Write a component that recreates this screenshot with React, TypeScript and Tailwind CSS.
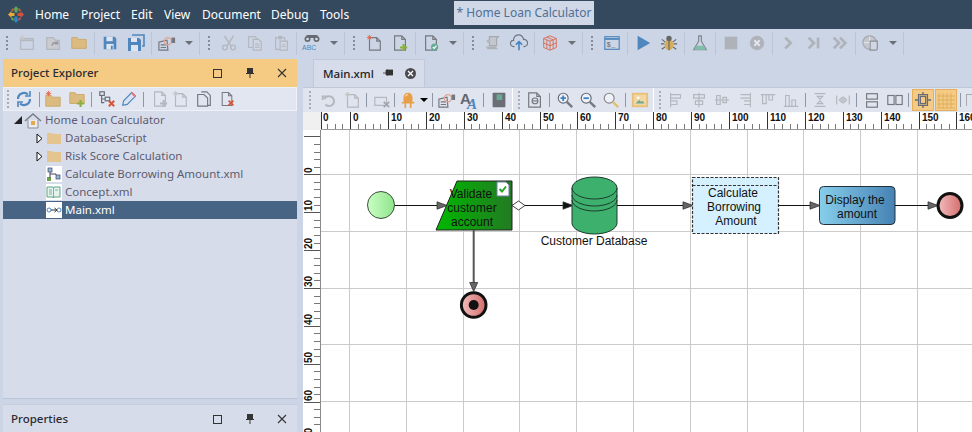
import React from "react";

const C = { g: "#b4b7be", d: "#75787e", b: "#4f86bd", t: "#dcbb80", o: "#e8a048", r: "#d9553a" };

function Svg({ children, s = 18 }: { children: React.ReactNode; s?: number }) {
  return (
    <svg width={s} height={s} viewBox="0 0 20 20" fill="none" strokeWidth="1.3">
      {children}
    </svg>
  );
}
const Sun = ({ x = 5, y = 4, c = "#e8684a" }: { x?: number; y?: number; c?: string }) => (
  <g stroke={c} strokeWidth="1">
    <path d={`M${x - 3} ${y}h6M${x} ${y - 3}v6M${x - 2} ${y - 2}l4 4M${x + 2} ${y - 2}l-4 4`} />
  </g>
);
const Doc = ({ c = C.d, x = 4, y = 2, w = 12, h = 16 }: { c?: string; x?: number; y?: number; w?: number; h?: number }) => (
  <path d={`M${x} ${y}h${w - 4}l4 4v${h - 4}h-${w}zM${x + w - 4} ${y}v4h4`} stroke={c} fill="none" />
);
const Plus = ({ c = "#8ab13c", x = 14, y = 15 }: { c?: string; x?: number; y?: number }) => (
  <path d={`M${x - 4} ${y}h8M${x} ${y - 4}v8`} stroke={c} strokeWidth="2.4" />
);
const Cross = ({ x = 15, y = 15 }: { x?: number; y?: number }) => (
  <path d={`M${x - 3} ${y - 3}l6 6M${x + 3} ${y - 3}l-6 6`} stroke={C.r} strokeWidth="2.2" />
);
const Folder = ({ c = C.t, x = 2, y = 4 }: { c?: string; x?: number; y?: number }) => (
  <path d={`M${x} ${y}h6l1.5 2H${x + 16}v10H${x}z`} fill={c} stroke="#c8a868" strokeWidth="1" />
);
const GearDoc = ({ c = "#e2a48f" }: { c?: string }) => (
  <g>
    <path d="M1 9l9-2 1 11H1zM3 12h6M3 15h6" stroke={C.d} />
    <circle cx="11" cy="8" r="4" stroke={c} />
    <path d="M15 4h4v6h-4z" fill={C.d} />
  </g>
);

const icons: Record<string, React.ReactNode> = {
  newwin: (<Svg><rect x="3" y="5" width="14" height="12" stroke={C.g} /><path d="M3 7h14" stroke={C.g} strokeWidth="2" /><Sun x={5} y={4} c="#c8c8c8" /></Svg>),
  opengray: (<Svg><path d="M3 17V4h7l3 3h4v10z" fill="#c9cbd0" stroke="#b4b7bc" /><path d="M9 13a3.5 3.5 0 0 1 6-2.5M15 8v3h-3" stroke="#96999f" strokeWidth="1.6" /></Svg>),
  folder: (<Svg><Folder y={4} /></Svg>),
  save: (<Svg><path d="M3 3h12l2 2v12H3z" fill={C.b} /><rect x="6" y="3" width="7" height="5" fill="#dfe5f0" /><rect x="6" y="11" width="8" height="6" fill="#dfe5f0" /><rect x="11" y="13" width="2" height="4" fill={C.b} /></Svg>),
  saveall: (<Svg s={20}><path d="M6 2h12v11h-2" stroke={C.b} strokeWidth="1.6" /><path d="M2 5h11l2 2v11H2z" fill={C.b} /><rect x="5" y="5" width="6" height="4" fill="#dfe5f0" /><rect x="5" y="12" width="7" height="6" fill="#dfe5f0" /></Svg>),
  gear: (<Svg><GearDoc /></Svg>),
  cut: (<Svg><circle cx="5.5" cy="15" r="2.6" stroke={C.g} strokeWidth="1.5" /><circle cx="14.5" cy="15" r="2.6" stroke={C.g} strokeWidth="1.5" /><path d="M5 2l7 11M15 2L8 13" stroke={C.g} strokeWidth="1.7" /></Svg>),
  copy: (<Svg><path d="M3 3h7l2 2v10H3z" stroke={C.g} /><path d="M8 6h6l3 3v9H8z" fill="#d0d6e4" stroke={C.g} /><path d="M10 11h5M10 13h5M10 15h5" stroke={C.g} strokeWidth="1" /></Svg>),
  paste: (<Svg><path d="M4 4h10v13H4z" stroke={C.g} /><rect x="7" y="2" width="4" height="4" fill={C.g} /><path d="M9 8h8v10H9z" fill="#d0d6e4" stroke={C.g} /><path d="M11 12h4M11 14h4" stroke={C.g} strokeWidth="1" /></Svg>),
  binoc: (<Svg s={20}><circle cx="5.5" cy="6" r="3" fill="#666a70" /><circle cx="14.5" cy="6" r="3" fill="#666a70" /><rect x="4" y="2" width="12" height="3" rx="1.5" fill="#666a70" /><circle cx="5.5" cy="6" r="1.3" fill="#d8dde8" /><circle cx="14.5" cy="6" r="1.3" fill="#d8dde8" /><text x="0" y="17" fontSize="7" fontWeight="400" fill="#4f86bd" fontFamily="Liberation Sans, sans-serif">ABC</text></Svg>),
  newdoc: (<Svg><Doc x={5} y={4} w={12} h={14} /><Sun x={5} y={4} /></Svg>),
  adddoc: (<Svg><Doc /><Plus /></Svg>),
  checkdoc: (<Svg><Doc /><circle cx="14" cy="14.5" r="4" fill="#6aa996" /><path d="M12 14.5l1.5 1.5 2.5-3" stroke="#fff" /></Svg>),
  scroll: (<Svg><path d="M6 3h10l-2 2v8H6z" fill="#c4c7cc" stroke="#a6a9af" /><path d="M2 14h11l2 2v1H4z" fill="#aeb1b7" /><circle cx="5" cy="8" r="2" fill="#b4b7be" /></Svg>),
  upload: (<Svg><path d="M5 14H4a3.5 3.5 0 0 1 0-7 5.5 5.5 0 0 1 11-1 4 4 0 0 1 1 8h-1" stroke="#6d7480" /><path d="M10 18V9M6.5 12L10 8.5l3.5 3.5" stroke="#3f80c0" strokeWidth="1.7" /></Svg>),
  cube: (<Svg><path d="M10 2l7 3v10l-7 3-7-3V5zM3 5l7 3 7-3M10 8v10M6.5 3.5l7 3M3 10l7 3 7-3M6.5 6.5v10M13.5 6.5v10" stroke="#d9684f" strokeWidth="1" /></Svg>),
  console: (<Svg><rect x="2" y="3" width="16" height="14" stroke={C.b} /><path d="M2 5.5h16" stroke={C.b} strokeWidth="2" /><text x="4" y="14" fontSize="8" fill="#666" fontFamily="Liberation Mono, monospace">$_</text></Svg>),
  play: (<Svg><path d="M4 2l14 8-14 8z" fill={C.b} /></Svg>),
  bug: (<Svg><path d="M2 6l4 3M18 6l-4 3M1 11h4M19 11h-4M2 17l4-3M18 17l-4-3" stroke="#666" /><ellipse cx="10" cy="12" rx="5" ry="6" fill="#d4ae5c" /><path d="M10 6v12" stroke="#666" /><circle cx="10" cy="5" r="3" fill="#666" /></Svg>),
  flask: (<Svg><path d="M8 2h4M8.5 2v6L3 17.5h14L11.5 8V2" stroke="#80858c" /><path d="M6 13h8l2.5 4.5h-13z" fill="#7cc0aa" /></Svg>),
  stop: (<Svg><rect x="3" y="3" width="14" height="14" fill="#afb2b9" /></Svg>),
  xcircle: (<Svg><circle cx="10" cy="10" r="8" fill="#afb2b9" /><path d="M7 7l6 6M13 7l-6 6" stroke="#e2e6ef" strokeWidth="2.2" /></Svg>),
  chev: (<Svg><path d="M7 4l6 6-6 6" stroke="#afb2b9" strokeWidth="3" /></Svg>),
  skip: (<Svg><path d="M4 4l6 6-6 6" stroke="#afb2b9" strokeWidth="3" /><rect x="13" y="4" width="3" height="12" fill="#afb2b9" /></Svg>),
  dbl: (<Svg><path d="M3 4l6 6-6 6M10 4l6 6-6 6" stroke="#afb2b9" strokeWidth="3" /></Svg>),
  globe: (<Svg><circle cx="8.5" cy="9.5" r="7.5" fill="#c3c6cc" stroke="#a6a9af" /><path d="M8.5 3v13M2 9.5h13" stroke="#dfe3ec" /><path d="M9 8h8v8a2 2 0 0 1-2 2H9z" fill="#d0d6e4" stroke="#8c8f95" /></Svg>),
  refresh: (<Svg s={20}><path d="M4 10a6 6 0 0 1 10-4.5M16 10a6 6 0 0 1-10 4.5" stroke="#4f86bd" strokeWidth="2.2" /><path d="M16 2v5h-5M4 18v-5h5" stroke="#4f86bd" strokeWidth="1.6" /></Svg>),
  newfolder: (<Svg><Folder y={6} /><Sun x={5} y={4} /></Svg>),
  addfolder: (<Svg><Folder y={3} /><Plus y={15} x={14} /></Svg>),
  tree: (<Svg><rect x="2" y="2" width="5" height="4" stroke="#666c78" /><rect x="8" y="8" width="5" height="4" stroke="#666c78" /><path d="M4 6v8h3M4 10h4" stroke="#666c78" /><Cross /></Svg>),
  pencil: (<Svg><path d="M3 17l1-5L13 3l4 4-9 9z" stroke="#4f86bd" fill="#d7e3f2" /><path d="M13 3l4 4" stroke="#e3787f" strokeWidth="2.4" /></Svg>),
  docplus: (<Svg><Doc c={C.g} /><Plus c={C.g} /></Svg>),
  newdocg: (<Svg><Doc c={C.g} x={5} y={4} w={12} h={14} /><Sun x={5} y={4} c="#c4c4c4" /></Svg>),
  docs: (<Svg><path d="M7 2h6l4 4v11h-3" stroke={C.d} /><path d="M3 5h7l4 4v9H3z" stroke={C.d} fill="#e0e5f0" /></Svg>),
  docx: (<Svg><Doc /><Cross /></Svg>),
  undo: (<Svg><path d="M5 9a5.5 5.5 0 1 1 1 6" stroke={C.g} strokeWidth="2.2" /><path d="M2 5h6v2H4v3H2z" fill={C.g} /></Svg>),
  desel: (<Svg><path d="M2 7h13v9H2z" stroke={C.g} /><path d="M12 12l6 6M18 12l-6 6" stroke="#a3a6ac" strokeWidth="2" /></Svg>),
  bulb: (<Svg><path d="M5 13V7a5 5 0 0 1 10 0v6z" fill={C.o} /><path d="M3 13h14M7 13v6M13 13v6" stroke={C.o} strokeWidth="1.8" /><path d="M7 6a3 3 0 0 1 3-2" stroke="#f8dcb0" /></Svg>),
  font: (<Svg s={20}><text x="0" y="14" fontSize="15" fontWeight="700" fill="#63666c" fontFamily="Liberation Sans, sans-serif">A</text><text x="7" y="19" fontSize="15" fontStyle="italic" fontWeight="700" fill="#4f86bd" fontFamily="Liberation Serif, serif">A</text></Svg>),
  book: (<Svg s={16}><rect x="2" y="1" width="16" height="18" rx="1" fill="#6b6e74" /><rect x="7" y="3" width="7" height="7" fill="#6aa996" /></Svg>),
  zoomdoc: (<Svg><Doc x={3} y={2} w={13} h={16} /><circle cx="10" cy="11" r="3.2" stroke={C.d} /><path d="M7.5 11h5" stroke={C.d} /></Svg>),
  zplus: (<Svg><circle cx="8" cy="8" r="5.5" stroke="#666c78" fill="#eef2f8" /><path d="M5 8h6M8 5v6" stroke="#3f80c0" strokeWidth="2" /><path d="M12 12l6 6" stroke={C.d} strokeWidth="2.6" /></Svg>),
  zminus: (<Svg><circle cx="8" cy="8" r="5.5" stroke="#666c78" fill="#eef2f8" /><path d="M5 8h6" stroke="#3f80c0" strokeWidth="2" /><path d="M12 12l6 6" stroke={C.d} strokeWidth="2.6" /></Svg>),
  zoom: (<Svg><circle cx="8" cy="8" r="5.5" stroke="#888" fill="#eef2f8" /><path d="M12 12l6 6" stroke="#e3bf6e" strokeWidth="2.6" /></Svg>),
  image: (<Svg><rect x="2" y="3" width="16" height="14" fill="#f3d7a2" stroke="#e8be78" strokeWidth="2" /><path d="M5 14l4-4 2 2 2-1 2 3z" fill="#6aa996" /><circle cx="8" cy="7.5" r="1.4" fill="#fff" /></Svg>),
  a1: (<Svg><path d="M4 2v16M4 4h11v4H4M4 11h7v4H4" stroke={C.g} /></Svg>),
  a2: (<Svg><path d="M10 2v16M4 4h12v4H4zM6 11h8v4H6z" stroke={C.g} /></Svg>),
  a3: (<Svg><path d="M2 10h16M4 5h4v10H4zM11 7h4v6h-4z" stroke={C.g} fill="#d8dde8" /></Svg>),
  a4: (<Svg><path d="M16 2v16M5 4h11v4H5M9 11h7v4H9" stroke={C.g} /></Svg>),
  a5: (<Svg><path d="M2 4h16M4 4v10h4V4M11 4v6h4V4" stroke={C.g} /></Svg>),
  a6: (<Svg><path d="M2 17h16M4 17V5h4v12M11 17v-7h4v7" stroke={C.g} /></Svg>),
  d1: (<Svg><path d="M4 3h12M4 17h12M7 6h6l-3 3zM7 14h6l-3-3z" stroke={C.g} /></Svg>),
  d2: (<Svg><path d="M3 5v10M17 5v10M6 10l3-3v6zM14 10l-3-3v6z" stroke={C.g} /></Svg>),
  g1: (<Svg><rect x="4" y="3" width="12" height="6" stroke={C.d} /><rect x="4" y="12" width="12" height="6" stroke={C.d} /></Svg>),
  g2: (<Svg><rect x="2" y="5" width="7" height="10" stroke={C.d} /><rect x="11" y="5" width="7" height="10" stroke={C.d} /></Svg>),
  snap: (<Svg><rect x="7" y="6" width="6" height="8" stroke="#666c78" strokeWidth="1.5" /><rect x="5" y="4" width="10" height="12" stroke="#666c78" /><path d="M10 1v3M10 16v3M1 10h4M15 10h4" stroke="#666c78" strokeWidth="1.5" /></Svg>),
  grid: (<Svg s={20}><path d="M3 3v15M7 3v15M11 3v15M15 3v15M1 6h18M1 10h18M1 14h18M1 18h18" stroke="#dcae60" strokeWidth="1" /></Svg>),
};

type It = { i?: string; k?: "sep" | "grip" | "caret" };

function Sep() {
  return <div className="w-px h-[23px] mx-[2px] shrink-0 bg-[#bcc5d6]" />;
}
function Grip() {
  return (
    <div className="w-[14px] flex flex-col items-center gap-[2px] shrink-0">
      {[0, 1, 2, 3].map((n) => (
        <div key={n} className="w-[2px] h-[2px] bg-[#868c97]" />
      ))}
    </div>
  );
}
function GripLight() {
  return (
    <div className="flex flex-col items-center gap-[2px] shrink-0">
      {[0, 1, 2, 3, 4].map((n) => (
        <div key={n} className="w-[2px] h-[2px] bg-[#a8adb8]" />
      ))}
    </div>
  );
}
function Caret() {
  return (
    <div className="w-[17px] flex justify-center shrink-0">
      <div className="w-0 h-0 border-x-[4px] border-x-transparent border-t-[4px] border-t-[#6b7078]" />
    </div>
  );
}
function Ic({ n, w = 26 }: { n: string; w?: number }) {
  return (
    <div className="flex items-center justify-center shrink-0" style={{ width: w }}>
      {icons[n]}
    </div>
  );
}

const mainBar: It[] = [
  { k: "grip" }, { i: "newwin" }, { i: "opengray" }, { i: "folder" }, { k: "sep" },
  { i: "save" }, { i: "saveall" }, { k: "sep" }, { i: "gear" }, { k: "caret" }, { k: "sep" },
  { k: "grip" }, { i: "cut" }, { i: "copy" }, { i: "paste" }, { k: "sep" },
  { i: "binoc" }, { k: "caret" }, { k: "sep" },
  { k: "grip" }, { i: "newdoc" }, { i: "adddoc" }, { k: "sep" }, { i: "checkdoc" }, { k: "caret" }, { k: "sep" },
  { k: "grip" }, { i: "scroll" }, { i: "upload" }, { k: "sep" }, { i: "cube" }, { k: "caret" }, { k: "sep" },
  { k: "grip" }, { i: "console" }, { k: "sep" }, { i: "play" }, { i: "bug" }, { k: "sep" }, { i: "flask" }, { k: "sep" },
  { i: "stop" }, { i: "xcircle" }, { k: "sep" }, { i: "chev" }, { i: "skip" }, { i: "dbl" }, { k: "sep" }, { i: "globe" }, { k: "caret" }, { k: "sep" },
];

function MainBar() {
  return (
    <div className="h-[29px] flex items-center pb-[1px] shrink-0">
      {mainBar.map((it, idx) =>
        it.k === "sep" ? <Sep key={idx} /> : it.k === "grip" ? <Grip key={idx} /> : it.k === "caret" ? <Caret key={idx} /> : <Ic key={idx} n={it.i!} />
      )}
    </div>
  );
}

function PanelHeader({ title, bg }: { title: string; bg: string }) {
  return (
    <div className={`h-[28px] flex items-center pl-[8px] shrink-0 ${bg}`}>
      <span className="text-[11.5px] font-medium text-[#2b2b33] flex-1">{title}</span>
      <div className="w-[9px] h-[9px] border border-[#333] mr-[23px]" />
      <svg width="10" height="12" viewBox="0 0 10 12" className="mr-[22px]">
        <path d="M2 1h6v5h1v1H1V6h1zM4.5 7h1v4h-1z" fill="#333" />
      </svg>
      <svg width="10" height="10" viewBox="0 0 10 10" className="mr-[10px]">
        <path d="M1 1l8 8M9 1l-8 8" stroke="#333" strokeWidth="1.1" />
      </svg>
    </div>
  );
}

function Tree() {
  const Row = ({ pl, arrow, icon, text, sel, gap = 2 }: { pl: number; arrow?: React.ReactNode; icon: React.ReactNode; text: string; sel?: boolean; gap?: number }) => (
    <div className={`h-[18px] flex items-center ${sel ? "bg-[#476484] text-white" : "text-[#5b5d72]"}`} style={{ paddingLeft: pl }}>
      <div className="w-[8px] mr-[1px] flex justify-center shrink-0">{arrow}</div>
      <div className="w-[19px] flex justify-center shrink-0" style={{ marginRight: gap }}>{icon}</div>
      <span className="text-[11.5px] whitespace-nowrap">{text}</span>
    </div>
  );
  const Hollow = (
    <svg width="7" height="11" viewBox="0 0 7 11">
      <path d="M1 1l5 4.5L1 10z" fill="#fff" stroke="#111" />
    </svg>
  );
  const Solid = (
    <svg width="8" height="8" viewBox="0 0 8 8">
      <path d="M8 0v8H0z" fill="#222" />
    </svg>
  );
  const folder = (
    <svg width="14" height="12" viewBox="0 0 14 12">
      <path d="M0 1h5l1 1h8v10H0z" fill="#e4c590" />
    </svg>
  );
  return (
    <div>
      <Row pl={11} arrow={Solid} text="Home Loan Calculator" gap={3} icon={
        <svg width="18" height="17" viewBox="0 0 18 17">
          <path d="M1 9l8-7 8 7" stroke="#7a7d85" strokeWidth="1.6" fill="none" />
          <path d="M4 8v8h10V8" stroke="#8a8d95" fill="#e8ebf2" />
          <rect x="7" y="9" width="4" height="4" fill="#e3a94a" />
        </svg>
      } />
      <Row pl={32} arrow={Hollow} icon={folder} text="DatabaseScript" />
      <Row pl={32} arrow={Hollow} icon={folder} text="Risk Score Calculation" />
      <Row pl={32} text="Calculate Borrowing Amount.xml" icon={
        <div className="w-[16px] h-[16px] bg-white flex items-center justify-center">
          <svg width="15" height="15" viewBox="0 0 15 15">
            <rect x="2" y="1" width="4" height="4" fill="#8fb6d8" stroke="#446" strokeWidth="0.7" />
            <rect x="10" y="8" width="4" height="4" fill="#8fb6d8" stroke="#446" strokeWidth="0.7" />
            <rect x="1" y="10" width="4" height="4" fill="#6ea04a" />
            <path d="M4 5v6M4 7h6v1" stroke="#446" fill="none" />
          </svg>
        </div>
      } />
      <Row pl={32} text="Concept.xml" icon={
        <div className="w-[16px] h-[16px] bg-white flex items-center justify-center">
          <svg width="15" height="13" viewBox="0 0 15 13">
            <path d="M1 1h6l.5 1L8 1h6v10H8l-.5 1L7 11H1z" fill="#e6f2ec" stroke="#5aa58a" />
            <path d="M7.5 2v9M3 4h3M3 6h3M3 8h3M9 4h3" stroke="#5aa58a" strokeWidth="0.8" />
          </svg>
        </div>
      } />
      <Row pl={32} sel text="Main.xml" icon={
        <div className="w-[16px] h-[16px] bg-white flex items-center justify-center">
          <svg width="16" height="8" viewBox="0 0 16 8">
            <circle cx="3" cy="4" r="2" stroke="#4f86bd" fill="none" />
            <circle cx="13" cy="4" r="2" stroke="#4f86bd" fill="none" />
            <path d="M5 4h6M8.5 2l2.5 2-2.5 2" stroke="#333" fill="none" />
          </svg>
        </div>
      } />
    </div>
  );
}

const RX = (v: number) => 350 + 3.79 * v;
const RY = (v: number) => 174.3 + 3.79 * v;
const range = (a: number, b: number) => Array.from({ length: (b - a) / 2 + 1 }, (_, i) => a + i * 2);
const fontA = "Liberation Sans, Arial, sans-serif";

function Arrow({ x, y, c = "#666" }: { x: number; y: number; c?: string }) {
  return <path d={`M${x} ${y - 3.7}L${x + 10} ${y}L${x} ${y + 3.7}z`} fill={c} stroke="#333" strokeWidth="0.8" />;
}
function Lbl({ x, y, t }: { x: number; y: number; t: string }) {
  return (
    <text x={x} y={y} fontSize="12" fill="#111" textAnchor="middle" fontFamily={fontA}>
      {t}
    </text>
  );
}

function Canvas() {
  return (
    <svg className="block" width="669" height="320" viewBox="303 112 669 320">
      <defs>
        <linearGradient id="gs"><stop offset="0" stopColor="#c9ffc4" /><stop offset="1" stopColor="#90e48c" /></linearGradient>
        <linearGradient id="gt"><stop offset="0" stopColor="#00b800" /><stop offset="1" stopColor="#237a23" /></linearGradient>
        <linearGradient id="gb"><stop offset="0" stopColor="#87ceeb" /><stop offset="1" stopColor="#4682b4" /></linearGradient>
        <linearGradient id="ge"><stop offset="0" stopColor="#f2bcbc" /><stop offset="1" stopColor="#d46c6c" /></linearGradient>
        <clipPath id="hr"><rect x="321" y="112" width="651" height="18" /></clipPath>
        <clipPath id="vr"><rect x="303" y="130" width="18" height="302" /></clipPath>
      </defs>
      <rect x="303" y="112" width="669" height="320" fill="#fff" />
      {[0, 1, 2, 3, 4, 5, 6, 7, 8, 9, 10].map((n) => (
        <path key={"vg" + n} d={`M${Math.round(349 + n * 56.8) + 0.5} 130V432`} stroke="#cbcbcb" />
      ))}
      {[0, 1, 2, 3, 4].map((n) => (
        <path key={"hg" + n} d={`M321 ${Math.round(174 + n * 56.8) + 0.5}H972`} stroke="#cbcbcb" />
      ))}

      <rect x="303" y="112" width="18" height="18" fill="#f0f0f0" />
      <g clipPath="url(#hr)">
        <rect x="321" y="112" width="651" height="18" fill="#fff" />
        <path d="M321 129.5H972" stroke="#9a9a9a" />
        {range(-8, 166).map((v) => (
          <path key={v} d={`M${Math.round(RX(v)) + 0.5} ${v % 10 === 0 ? 112 : 124}V129`} stroke={v % 10 === 0 ? "#333" : "#777"} />
        ))}
        <path d="M321.5 112V129" stroke="#333" />
        <text x={323} y={120.5} fontSize="10" fontWeight="700" fill="#111" fontFamily={fontA}>0</text>
        {range(0, 166).filter((v) => v % 10 === 0).map((v) => (
          <text key={v} x={Math.round(RX(v)) + 3} y={120.5} fontSize="10" fontWeight="700" fill="#111" fontFamily={fontA}>
            {v}
          </text>
        ))}
      </g>
      <g clipPath="url(#vr)">
        <rect x="303" y="130" width="17" height="302" fill="#fff" />
        <path d="M320.5 130V432" stroke="#8a8a8a" />
        {range(-12, 70).map((v) => (
          <path key={v} d={`M${v % 10 === 0 ? 304 : 314} ${Math.round(RY(v)) + 0.5}H320`} stroke={v % 10 === 0 ? "#555" : "#777"} />
        ))}
        {range(0, 70).filter((v) => v % 10 === 0).map((v) => (
          <text key={v} transform={`translate(312 ${Math.round(RY(v)) - 1}) rotate(-90)`} fontSize="10" fontWeight="700" fill="#111" fontFamily={fontA}>
            {v}
          </text>
        ))}
      </g>

      <circle cx="381" cy="205" r="13.5" fill="url(#gs)" stroke="#2c3a2c" strokeWidth="0.9" />
      <path d="M395 205.5H437" stroke="#111" />
      <Arrow x={437} y={205.5} />
      <path d="M457 181H512V230H436z" fill="url(#gt)" stroke="#222" />
      <path d="M497 182h9l3 3v11h-12z" fill="#fff" stroke="#7480a8" />
      <path d="M499.5 189l2.5 2.5 4-5" stroke="#2aa32a" strokeWidth="2" fill="none" />
      <Lbl x={471} y={198} t="Validate" />
      <Lbl x={472} y={212} t="customer" />
      <Lbl x={472} y={226} t="account" />
      <path d="M512 205.5L518.5 201L525 205.5L518.5 210z" fill="#fff" stroke="#111" strokeWidth="0.8" />
      <path d="M525 205.5H563" stroke="#111" />
      <Arrow x={563} y={205.5} c="#111" />
      <path d="M572 188V223A22.5 11 0 0 0 617 223V188A22.5 11 0 0 0 572 188z" fill="#3cb06c" stroke="#1e3a2c" />
      <path d="M572 188A22.5 11 0 0 0 617 188M572 195A22.5 11 0 0 0 617 195M572 200A22.5 11 0 0 0 617 200" fill="none" stroke="#1e3a2c" />
      <Lbl x={594} y={245} t="Customer Database" />
      <path d="M617 205.5H683" stroke="#111" />
      <Arrow x={683} y={205.5} />
      <rect x="692.5" y="177.5" width="86" height="56" fill="#d5f1ff" stroke="#333" strokeWidth="1.2" strokeDasharray="3 1.5" />
      <path d="M692.5 185.5H778.5" stroke="#333" strokeWidth="1.2" strokeDasharray="3 1.5" />
      <Lbl x={733} y={197} t="Calculate" />
      <Lbl x={734} y={211} t="Borrowing" />
      <Lbl x={736} y={225} t="Amount" />
      <path d="M779 205.5H810" stroke="#111" />
      <Arrow x={810} y={205.5} />
      <rect x="819.5" y="186.5" width="75.5" height="38" rx="4" fill="url(#gb)" stroke="#22303c" />
      <Lbl x={855} y={204} t="Display the" />
      <Lbl x={857} y={218} t="amount" />
      <path d="M895 205.5H928" stroke="#111" />
      <Arrow x={928} y={205.5} />
      <circle cx="950" cy="205.5" r="12" fill="url(#ge)" stroke="#111" strokeWidth="3" />
      <path d="M473.7 230V283" stroke="#555" strokeWidth="2" />
      <path d="M469.7 282.5H477.7L473.7 291.5z" fill="#666" stroke="#333" strokeWidth="0.8" />
      <circle cx="473.7" cy="305" r="12.3" fill="url(#ge)" stroke="#111" strokeWidth="3" />
      <circle cx="473.7" cy="305" r="5" fill="#111" />
    </svg>
  );
}

type B = { c: string; w?: number; l?: number; r?: number };
const doc1: B[] = [
  { c: "undo", w: 23 }, { c: "newdocg", w: 23 }, { c: "sep", l: 3, r: 3 }, { c: "desel", w: 23 }, { c: "sep", l: 1, r: 1 },
  { c: "bulb", w: 23 }, { c: "caret" }, { c: "sep", l: 4, r: 3 }, { c: "gear", w: 22 }, { c: "font", w: 23 }, { c: "sep", l: 2, r: 3 }, { c: "book", w: 23 },
];
const doc2: B[] = [
  { c: "zoomdoc", w: 23 }, { c: "sep", l: 3, r: 3 }, { c: "zplus", w: 23 }, { c: "zminus", w: 23 }, { c: "zoom", w: 23 }, { c: "sep", l: 3, r: 2 }, { c: "image", w: 23 },
];
const doc3: B[] = [
  { c: "a1", w: 23 }, { c: "a2", w: 23 }, { c: "a3", w: 23 }, { c: "a4", w: 23 }, { c: "a5", w: 23 }, { c: "a6", w: 23 }, { c: "sep", l: 3, r: 2 },
  { c: "d1", w: 23 }, { c: "d2", w: 23 }, { c: "sep", l: 2, r: 3 }, { c: "g1", w: 23 }, { c: "g2", w: 23 }, { c: "sep", l: 2, r: 3 },
];

function BarItems({ items }: { items: B[] }) {
  return (
    <>
      {items.map((it, i) =>
        it.c === "sep" ? (
          <div key={i} className="w-px h-[14px] bg-[#8e97a8] shrink-0" style={{ marginLeft: it.l, marginRight: it.r }} />
        ) : it.c === "caret" ? (
          <div key={i} className="w-[9px] flex justify-center shrink-0">
            <div className="w-0 h-0 border-x-[4px] border-x-transparent border-t-[4px] border-t-black" />
          </div>
        ) : (
          <Ic key={i} n={it.c} w={it.w} />
        )
      )}
    </>
  );
}

function BarEnd() {
  return (
    <>
      <div className="w-px h-[24px] bg-white ml-[2px] mr-[2px] shrink-0" />
      <div className="w-[8px] flex justify-center shrink-0"><GripLight /></div>
    </>
  );
}

function TbSep({ l, r }: { l: number; r: number }) {
  return <div className="w-px h-[15px] bg-[#8e97a8] shrink-0" style={{ marginLeft: l, marginRight: r }} />;
}

export default function App() {
  return (
    <div className="w-[972px] h-[432px] overflow-hidden flex flex-col bg-[#ccd5e5] font-['Noto_Sans','Open_Sans',sans-serif]">
      <div className="h-[29px] bg-[#34495e] flex items-center shrink-0 text-white text-[12px]">
        <svg width="16" height="17" viewBox="0 0 16 17" className="ml-[8px] mr-[11px] shrink-0">
          <path d="M0 8.5L3.5 5v2h3v3h-3v2z" fill="#e8a83a" />
          <path d="M8 0l3 3.5H9.5v3h-3v-3H5z" fill="#5da558" />
          <path d="M16 8.5L12.5 5v2h-3v3h3v2z" fill="#d9503a" />
          <path d="M8 17l3-3.5H9.5v-3h-3v3H5z" fill="#2f86c4" />
          <path d="M3 4L5 2l1 2-2 2zM13 4l-2-2-1 2 2 2z" fill="#b0663c" />
          <path d="M3 13l2 2 1-2-2-2z" fill="#6ca544" />
          <path d="M13 13l-2 2-1-2 2-2z" fill="#c0504a" />
        </svg>
        <div className="flex w-[419px] shrink-0">
          <span className="w-[46px]">Home</span>
          <span className="w-[50px]">Project</span>
          <span className="w-[33px]">Edit</span>
          <span className="w-[38px]">View</span>
          <span className="w-[69px]">Document</span>
          <span className="w-[49px]">Debug</span>
          <span>Tools</span>
        </div>
        <div className="h-[24px] w-[140px] mt-[-3px] bg-[#d0d8e7] text-[#4f6f96] flex items-center justify-center whitespace-nowrap">
          * Home Loan Calculator
        </div>
      </div>

      <MainBar />

      <div className="flex-1 flex min-h-0 pt-[1px]">
        <div className="w-[294px] ml-[3px] flex flex-col shrink-0">
          <div className="flex-1 flex flex-col bg-[#d7dcea] border-b border-[#bcc5d8] min-h-0">
            <PanelHeader title="Project Explorer" bg="bg-[#f5cb83]" />
            <div className="h-[24px] bg-[#e1e6f1] border border-[#eef1f7] flex items-center pl-[3px] shrink-0">
              <GripLight />
              <div className="w-[5px]" />
              <Ic n="refresh" w={20} />
              <TbSep l={5} r={1} />
              <Ic n="newfolder" w={24} />
              <Ic n="addfolder" w={24} />
              <TbSep l={2} r={3} />
              <Ic n="tree" w={24} />
              <Ic n="pencil" w={20} />
              <TbSep l={4} r={5} />
              <Ic n="docplus" w={22} />
              <Ic n="newdocg" w={18} />
              <Ic n="docs" w={30} />
              <Ic n="docx" w={16} />
            </div>
            <Tree />
          </div>
          <div className="h-[5px] shrink-0" />
          <div className="h-[28px] shrink-0 bg-[#d7dcea] border-t border-[#c6cede]">
            <PanelHeader title="Properties" bg="" />
          </div>
        </div>

        <div className="w-[675px] flex flex-col shrink-0 pl-[6px]">
          <div className="h-[28px] flex shrink-0 pl-[10px]">
            <div className="w-[112px] h-[28px] bg-[#d7dcea] border-t border-x border-[#c0c8d9] flex items-center pl-[9px] text-[11.5px] font-medium text-[#222]">
              <span className="w-[60px]">Main.xml</span>
              <svg width="10" height="9" viewBox="0 0 10 9" className="mr-[12px]">
                <path d="M0 4h3M3 1h2v5H3zM4 1h6v5H4z" stroke="#333" strokeWidth="0.8" fill="#333" />
              </svg>
              <div className="w-[11px] h-[11px] rounded-full bg-[#4a4a50] flex items-center justify-center">
                <svg width="7" height="7" viewBox="0 0 7 7"><path d="M1 1l5 5M6 1L1 6" stroke="#fff" strokeWidth="1.3" /></svg>
              </div>
            </div>
          </div>
          <div className="h-[25px] bg-[#dfe4ef] border-t border-[#bfc7d8] flex items-center shrink-0 overflow-hidden">
            <div className="w-[14px] flex justify-center shrink-0"><GripLight /></div>
            <BarItems items={doc1} />
            <BarEnd />
            <BarItems items={doc2} />
            <BarEnd />
            <BarItems items={doc3} />
            <div className="w-[22px] h-[22px] bg-[#f5cb83] border border-[#e4b05e] flex items-center justify-center shrink-0">{icons.snap}</div>
            <div className="w-[22px] h-[22px] ml-[1px] bg-[#f5cb83] border border-[#e4b05e] flex items-center justify-center shrink-0">{icons.grid}</div>
            <div className="w-px h-[14px] bg-[#8e97a8] ml-[3px] shrink-0" />
            <div className="ml-[5px] w-[6px] h-[12px] border-l border-t border-[#aaa] shrink-0" />
          </div>
          <Canvas />
        </div>
      </div>
    </div>
  );
}
